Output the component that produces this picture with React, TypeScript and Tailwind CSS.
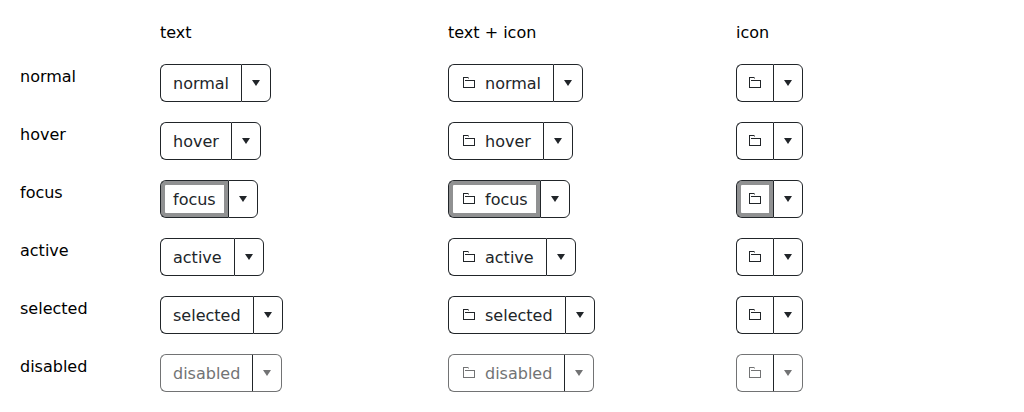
import React from "react";

type State = "normal" | "hover" | "focus" | "active" | "selected" | "disabled";
type Variant = "text" | "text + icon" | "icon";

const states: State[] = ["normal", "hover", "focus", "active", "selected", "disabled"];
const variants: Variant[] = ["text", "text + icon", "icon"];

function FolderIcon() {
  return (
    <svg className="size-4 shrink-0" viewBox="0 0 16 16" fill="currentColor" aria-hidden="true">
      <path d="M2 2h5v1H3v9h10V6H4V5h10v8H2z" />
      <path d="M7 2h1v2H7z" opacity="0.5" />
    </svg>
  );
}

function ArrowIcon() {
  return (
    <svg className="h-4 w-2 shrink-0" viewBox="0 0 8 16" fill="currentColor" aria-hidden="true">
      <path d="M0 5h8l-4 6z" />
    </svg>
  );
}

function SplitButton({ state, variant }: { state: State; variant: Variant }) {
  const disabled = state === "disabled";
  const tone = disabled ? "text-[#727374] border-[#727374]" : "text-[#212529] border-[#212529]";
  const ring = state === "focus" ? "shadow-[inset_0_0_0_4px_#909192]" : "";
  const padding = variant === "icon" ? "px-[10px]" : "px-3";
  return (
    <div className="flex min-h-[38px]">
      <button
        type="button"
        disabled={disabled}
        aria-label={variant === "icon" ? state : undefined}
        className={`flex items-center gap-2 rounded-l-md border border-r-0 bg-white py-[6px] outline-none ${padding} ${tone} ${ring}`}
      >
        {variant !== "text" && <FolderIcon />}
        {variant !== "icon" && <span className="h-6">{state}</span>}
      </button>
      <button
        type="button"
        disabled={disabled}
        aria-label={`${state} options`}
        className={`flex items-center rounded-r-md border border-l-[#212529] bg-white px-[10px] ${tone}`}
      >
        <ArrowIcon />
      </button>
    </div>
  );
}

export default function App() {
  return (
    <main className="grid grid-cols-[140px_1fr_1fr_1fr] gap-y-5 bg-white py-5 pl-5 font-['DejaVu_Sans',sans-serif] text-base leading-[26px] text-black">
      <div className="h-6" />
      {variants.map((variant) => (
        <div key={variant} className="h-6">
          {variant}
        </div>
      ))}
      {states.map((state) => (
        <React.Fragment key={state}>
          <div>{state}</div>
          {variants.map((variant) => (
            <SplitButton key={variant} state={state} variant={variant} />
          ))}
        </React.Fragment>
      ))}
    </main>
  );
}
